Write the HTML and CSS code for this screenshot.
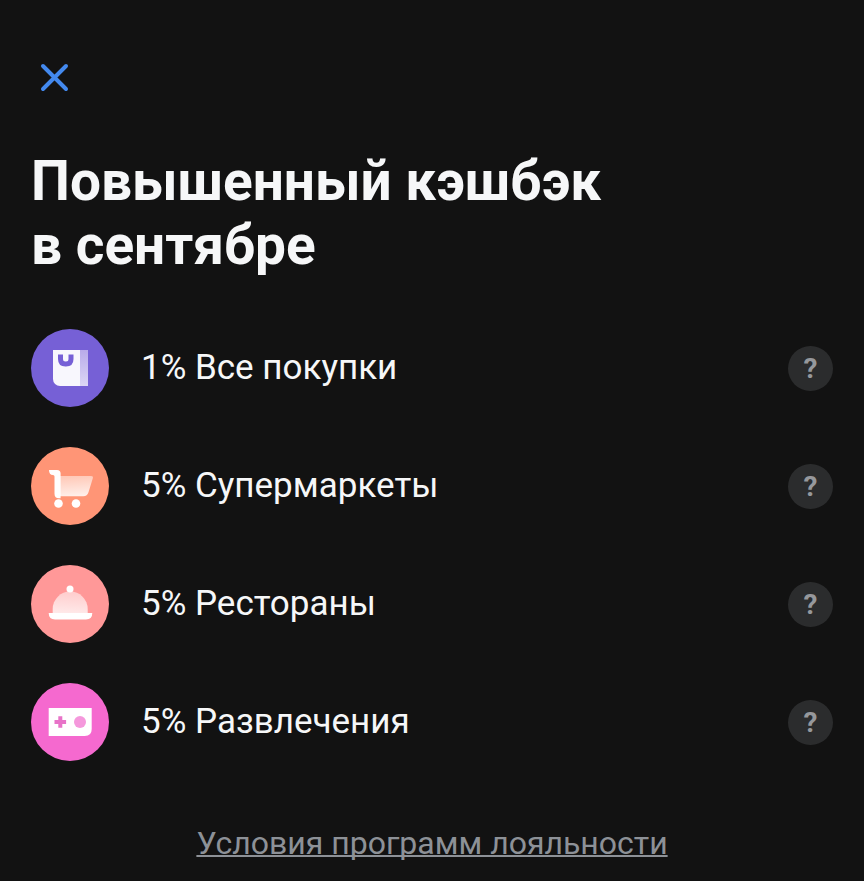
FILE: index.html
```html
<!DOCTYPE html>
<html lang="ru">
<head>
<meta charset="utf-8">
<meta name="viewport" content="width=device-width, initial-scale=1">
<title>Повышенный кэшбэк в сентябре</title>
<link rel="stylesheet" href="styles.css">
</head>
<body>
<main class="page">
  <button class="close" type="button" aria-label="Закрыть">
    <svg viewBox="0 0 48 48" aria-hidden="true"><path d="M12 13L35 36M35 13L12 36"/></svg>
  </button>
  <h1 class="title">Повышенный кэшбэк<br>в сентябре</h1>
  <ul class="list">
    <li class="row">
      <svg class="icon" viewBox="0 0 78 78" aria-hidden="true">
        <defs><linearGradient id="bag" x1="0" y1="0" x2="0" y2="1"><stop offset="0" stop-color="#b9abea"/><stop offset="1" stop-color="#dcd6f5"/></linearGradient></defs>
        <circle cx="39" cy="39" r="39" fill="#7660d6"/>
        <path d="M49 21h8v36h-8z" fill="url(#bag)"/>
        <path d="M22 21h27v36H29a7 7 0 0 1-7-7z" fill="#f8f7fd"/>
        <path d="M29.500 25.500v4.500q0 5 5 5h.500q5 0 5-5v-4.500" fill="none" stroke="#7660d6" stroke-width="5"/>
      </svg>
      <span class="name">1% Все покупки</span>
      <button class="help" type="button" aria-label="Подробнее: все покупки">?</button>
    </li>
    <li class="row">
      <svg class="icon" viewBox="0 0 78 78" aria-hidden="true">
        <defs><linearGradient id="cart" x1="0.500" y1="0" x2="0.600" y2="1"><stop offset="0" stop-color="#ffc9b8"/><stop offset="1" stop-color="#fff0eb"/></linearGradient></defs>
        <circle cx="39" cy="39" r="39" fill="#ff9576"/>
        <path d="M29 29h31q2.500 0 1.800 2.300l-4.300 14q-1.200 4-5.200 4H29z" fill="url(#cart)"/>
        <path d="M18 23h8q3.600 0 3.600 3.600v24.600H28q-4.500 0-4.500-4.500V29.500q0-1.500-1.500-1.500-4 0-4-5z" fill="#fff"/>
        <circle cx="27.500" cy="56.500" r="4.300" fill="#fff"/>
        <circle cx="45" cy="56.500" r="4.300" fill="#fff"/>
      </svg>
      <span class="name">5% Супермаркеты</span>
      <button class="help" type="button" aria-label="Подробнее: супермаркеты">?</button>
    </li>
    <li class="row">
      <svg class="icon" viewBox="0 0 78 78" aria-hidden="true">
        <defs><linearGradient id="dome" x1="0.600" y1="0" x2="0.500" y2="1"><stop offset="0" stop-color="#ffcccc"/><stop offset="1" stop-color="#ffe9e9"/></linearGradient></defs>
        <circle cx="39" cy="39" r="39" fill="#ff9898"/>
        <path d="M21.700 48.500V44a17.500 17.500 0 0 1 35 0v4.500z" fill="url(#dome)"/>
        <circle cx="39" cy="24" r="3.500" fill="#fff"/>
        <path d="M17.700 48h43.600q0 6.500-6.300 6.500H24q-6.300 0-6.300-6.500z" fill="#fff"/>
      </svg>
      <span class="name">5% Рестораны</span>
      <button class="help" type="button" aria-label="Подробнее: рестораны">?</button>
    </li>
    <li class="row">
      <svg class="icon" viewBox="0 0 78 78" aria-hidden="true">
        <circle cx="39" cy="39" r="39" fill="#f569cf"/>
        <path d="M17.700 25h43v21q0 7-7 7h-36z" fill="#fff"/>
        <path d="M29.300 33.200v11.600M23.500 39h11.600" fill="none" stroke="#e873c8" stroke-width="4"/>
        <circle cx="49" cy="39" r="6" fill="#f598dc"/>
      </svg>
      <span class="name">5% Развлечения</span>
      <button class="help" type="button" aria-label="Подробнее: развлечения">?</button>
    </li>
  </ul>
  <a class="terms" href="#terms">Условия программ лояльности</a>
</main>
</body>
</html>
```
FILE: styles.css
```css
* {
  box-sizing: border-box;
}

body {
  margin: 0;
  background: #121212;
  color: #f6f7f8;
  font-family: Roboto, "Liberation Sans", sans-serif;
}

.page {
  display: flex;
  flex-direction: column;
  padding: 53px 31px 16px;
}

button {
  padding: 0;
  border: 0;
  font: inherit;
  cursor: pointer;
}

.close {
  width: 48px;
  height: 48px;
  background: none;
}

.close svg {
  display: block;
  fill: none;
  stroke: #4389ee;
  stroke-width: 4;
  stroke-linecap: round;
}

.title {
  margin: 48px 0 0;
  font-size: 55px;
  line-height: 64px;
  font-weight: 700;
}

.list {
  display: flex;
  flex-direction: column;
  gap: 40px;
  margin: 52px 0 0;
  padding: 0;
  list-style: none;
}

.row {
  display: flex;
  align-items: center;
  gap: 32px;
}

.icon {
  flex: none;
  width: 78px;
  height: 78px;
}

.name {
  flex: 1;
  font-size: 35px;
  line-height: 44px;
}

.help {
  flex: none;
  width: 45px;
  height: 45px;
  border-radius: 50%;
  background: #2b2c2d;
  color: #96989c;
  font-size: 28px;
  line-height: 45px;
  font-weight: 700;
}

.terms {
  align-self: center;
  margin-top: 62px;
  color: #8d9197;
  font-size: 32px;
  line-height: 40px;
  text-decoration: underline;
  text-decoration-thickness: 2px;
  text-decoration-skip-ink: none;
}
```
